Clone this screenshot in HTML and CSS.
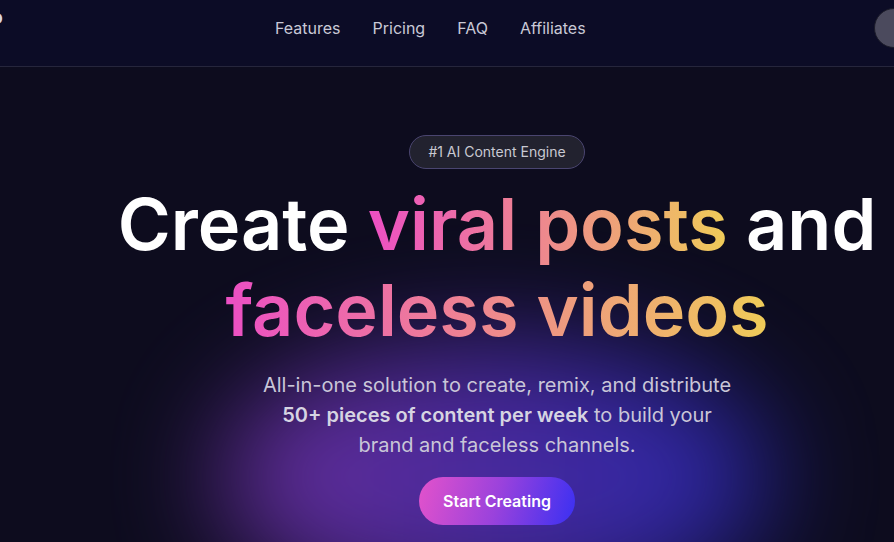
FILE: index.html
```html
<!DOCTYPE html>
<html lang="en">
<head>
<meta charset="utf-8">
<title>Create viral posts and faceless videos</title>
<link rel="stylesheet" href="styles.css">
</head>
<body>
<div class="page">
  <header class="header">
    <a class="logo" href="#">Repurpo</a>
    <nav class="nav">
      <a href="#">Features</a>
      <a href="#">Pricing</a>
      <a href="#">FAQ</a>
      <a href="#">Affiliates</a>
    </nav>
    <div class="avatar"></div>
  </header>
  <main class="hero">
    <div class="glow"></div>
    <div class="badge">#1 AI Content Engine</div>
    <h1 class="title">Create <span class="grad">viral posts</span> and<br><span class="grad">faceless videos</span></h1>
    <p class="sub">All-in-one solution to create, remix, and distribute <strong>50+ pieces of content per week</strong> to build your brand and faceless channels.</p>
    <a class="cta" href="#">Start Creating</a>
  </main>
</div>
</body>
</html>
```

FILE: styles.css
```css
html, body {
  margin: 0;
  padding: 0;
  overflow: hidden;
  background: #0d0c1e;
}
body {
  font-family: Inter, "Noto Sans", sans-serif;
  color: #fff;
  height: 542px;
}
.page {
  width: 994px;
}
.header {
  display: flex;
  align-items: center;
  height: 40px;
  padding: 8px 80px 18px 0;
  background: #0c0c26;
  border-bottom: 1px solid #26263c;
}
.logo {
  display: block;
  width: 90px;
  margin-left: -87px;
  text-align: right;
  font-size: 20px;
  font-weight: 600;
  color: #d8d8e4;
  text-decoration: none;
  line-height: 1;
  margin-top: -22px;
}
.nav {
  display: flex;
  gap: 32px;
  margin-left: 272px;
}
.nav a {
  font-size: 16px;
  color: #c9c9d6;
  text-decoration: none;
}
.avatar {
  margin-left: auto;
  width: 38px;
  height: 38px;
  border-radius: 50%;
  background: #4b4a5d;
  border: 1px solid #1c1c2a;
}
.hero {
  position: relative;
  display: flex;
  flex-direction: column;
  align-items: center;
  padding-top: 68px;
  text-align: center;
}
.glow {
  position: absolute;
  left: 220px;
  top: 275px;
  width: 550px;
  height: 270px;
  border-radius: 50%;
  background: linear-gradient(90deg, #8a3cc8 0%, #6434c4 40%, #2e30d6 100%);
  filter: blur(55px);
  opacity: 0.75;
  z-index: 0;
}
.badge, .title, .sub, .cta {
  position: relative;
  z-index: 1;
}
.badge {
  height: 32px;
  line-height: 32px;
  padding: 0 18px;
  border-radius: 17px;
  background: #22222f;
  border: 1px solid #4a4570;
  font-size: 14px;
  color: #c9c9d2;
}
.title {
  margin: 12px 0 0;
  font-size: 72px;
  line-height: 86.4px;
  font-weight: 600;
  letter-spacing: 0;
  color: #fff;
}
.grad {
  background: linear-gradient(90deg, #ec4fc4 0%, #ee8a8c 50%, #efcc58 100%);
  -webkit-background-clip: text;
  background-clip: text;
  color: transparent;
}
.sub {
  margin: 16px 0 0;
  width: 480px;
  font-size: 20px;
  line-height: 30px;
  color: #c9c6d8;
}
.sub strong {
  font-weight: 600;
  color: #d6d4e2;
}
.cta {
  margin-top: 17px;
  height: 48px;
  line-height: 48px;
  padding: 0 24px;
  border-radius: 24px;
  background: linear-gradient(105deg, #e352cb 0%, #9a42dc 50%, #3a30f2 100%);
  color: #fff;
  font-size: 16px;
  font-weight: 600;
  text-decoration: none;
}
```
